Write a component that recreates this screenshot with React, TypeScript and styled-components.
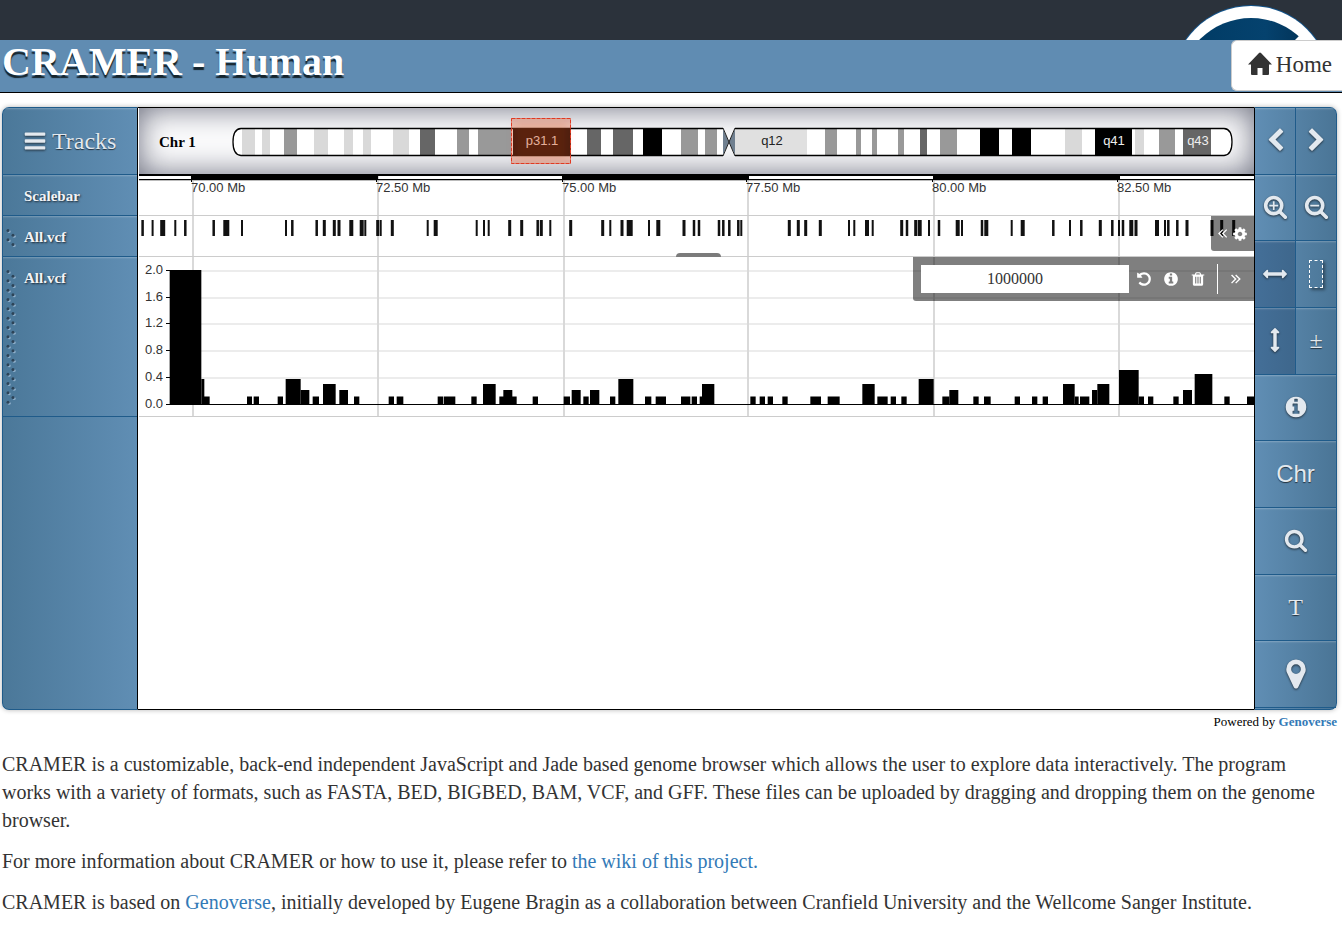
import React from "react";
import styled, { createGlobalStyle, css } from "styled-components";

const SERIF = '"Liberation Serif", "Times New Roman", serif';
const SANS = '"Liberation Sans", Arial, sans-serif';
const EDGE = "#1f5b8a";

const GlobalStyle = createGlobalStyle`
  *, *::before, *::after { box-sizing: border-box; }
  body { margin: 0; background: #fff; color: #333; font-family: ${SERIF}; }
  button, input { font-family: inherit; margin: 0; }
  a { color: #337ab7; text-decoration: none; }
`;

/* ---------- icons, on a 1792 unit square ---------- */

const LENS =
  "M1216 832q0-185-131.5-316.5t-316.5-131.5-316.5 131.5-131.5 316.5 131.5 316.5 316.5 131.5 316.5-131.5 131.5-316.5zm512 832q0 52-38 90t-90 38q-54 0-90-38l-343-342q-179 124-399 124-143 0-273.5-55.5t-225-150-150-225-55.5-273.5 55.5-273.5 150-225 225-150 273.5-55.5 273.5 55.5 225 150 150 225 55.5 273.5q0 220-124 399l343 343q37 37 37 90z";

const ICONS = {
  bars: "M1664 1344v128q0 26-19 45t-45 19h-1408q-26 0-45-19t-19-45v-128q0-26 19-45t45-19h1408q26 0 45 19t19 45zm0-512v128q0 26-19 45t-45 19h-1408q-26 0-45-19t-19-45v-128q0-26 19-45t45-19h1408q26 0 45 19t19 45zm0-512v128q0 26-19 45t-45 19h-1408q-26 0-45-19t-19-45v-128q0-26 19-45t45-19h1408q26 0 45 19t19 45z",
  left: "M1427 301l-531 531 531 531q19 19 19 45t-19 45l-166 166q-19 19-45 19t-45-19l-742-742q-19-19-19-45t19-45l742-742q19-19 45-19t45 19l166 166q19 19 19 45t-19 45z",
  right: "M1363 877l-742 742q-19 19-45 19t-45-19l-166-166q-19-19-19-45t19-45l531-531-531-531q-19-19-19-45t19-45l166-166q19-19 45-19t45 19l742 742q19 19 19 45t-19 45z",
  search: LENS,
  zoomIn:
    "M1088 800v64q0 13-9.5 22.5t-22.5 9.5h-224v224q0 13-9.5 22.5t-22.5 9.5h-64q-13 0-22.5-9.5t-9.5-22.5v-224h-224q-13 0-22.5-9.5t-9.5-22.5v-64q0-13 9.5-22.5t22.5-9.5h224v-224q0-13 9.5-22.5t22.5-9.5h64q13 0 22.5 9.5t9.5 22.5v224h224q13 0 22.5 9.5t9.5 22.5z" + LENS,
  zoomOut:
    "M1088 800v64q0 13-9.5 22.5t-22.5 9.5h-576q-13 0-22.5-9.5t-9.5-22.5v-64q0-13 9.5-22.5t22.5-9.5h576q13 0 22.5 9.5t9.5 22.5z" + LENS,
  horizontal:
    "M1792 896q0 26-19 45l-256 256q-19 19-45 19t-45-19-19-45v-128h-1024v128q0 26-19 45t-45 19-45-19l-256-256q-19-19-19-45t19-45l256-256q19-19 45-19t45 19 19 45v128h1024v-128q0-26 19-45t45-19 45 19l256 256q19 19 19 45z",
  vertical:
    "M1216 320q0 26-19 45t-45 19h-128v1024h128q26 0 45 19t19 45-19 45l-256 256q-19 19-45 19t-45-19l-256-256q-19-19-19-45t19-45 45-19h128v-1024h-128q-26 0-45-19t-19-45 19-45l256-256q19-19 45-19t45 19l256 256q19 19 19 45z",
  info: "M1152 1376v-160q0-14-9-23t-23-9h-96v-512q0-14-9-23t-23-9h-320q-14 0-23 9t-9 23v160q0 14 9 23t23 9h96v320h-96q-14 0-23 9t-9 23v160q0 14 9 23t23 9h448q14 0 23-9t9-23zm-128-896v-160q0-14-9-23t-23-9h-192q-14 0-23 9t-9 23v160q0 14 9 23t23 9h192q14 0 23-9t9-23zm640 416q0 209-103 385.5t-279.5 279.5-385.5 103-385.5-103-279.5-279.5-103-385.5 103-385.5 279.5-279.5 385.5-103 385.5 103 279.5 279.5 103 385.5z",
  marker:
    "M1152 640q0-106-75-181t-181-75-181 75-75 181 75 181 181 75 181-75 75-181zm256 0q0 109-33 179l-364 774q-16 33-47.5 52t-67.5 19-67.5-19-46.5-52l-365-774q-33-70-33-179 0-212 150-362t362-150 362 150 150 362z",
  cog: "M1152 896q0-106-75-181t-181-75-181 75-75 181 75 181 181 75 181-75 75-181zm512-109v222q0 12-8 23t-20 13l-185 28q-19 54-39 91 35 50 107 138 10 12 10 25t-9 23q-27 37-99 108t-94 71q-12 0-26-9l-138-108q-44 23-91 38-16 136-29 186-7 28-36 28h-222q-14 0-24.5-8.5t-11.5-21.5l-28-184q-49-16-90-37l-141 107q-10 9-25 9-14 0-25-11-126-114-165-168-7-10-7-23 0-12 8-23 15-21 51-66.5t54-70.5q-27-50-41-99l-183-27q-13-2-21-12.5t-8-23.5v-222q0-12 8-23t19-13l186-28q14-46 39-92-40-57-107-138-10-12-10-24 0-10 9-23 26-36 98.5-107.5t94.5-71.5q13 0 26 10l138 107q44-23 91-38 16-136 29-186 7-28 36-28h222q14 0 24.5 8.5t11.5 21.5l28 184q49 16 90 37l142-107q9-9 24-9 13 0 25 10 129 119 165 170 7 8 7 22 0 12-8 23-15 21-51 66.5t-54 70.5q26 50 41 98l183 28q13 2 21 12.5t8 23.5z",
  undo: "M1664 896q0 156-61 298t-164 245-245 164-298 61q-172 0-327-72.5t-264-204.5q-7-10-6.5-22.5t8.5-20.5l137-138q10-9 25-9 16 2 23 12 73 95 179 147t225 52q104 0 198.5-40.5t163.5-109.5 109.5-163.5 40.5-198.5-40.5-198.5-109.5-163.5-163.5-109.5-198.5-40.5q-98 0-188 35.5t-160 101.5l137 138q31 30 14 69-17 40-59 40h-448q-26 0-45-19t-19-45v-448q0-42 40-59 39-17 69 14l130 129q107-101 244.5-156.5t284.5-55.5q156 0 298 61t245 164 164 245 61 298z",
  trash:
    "M704 1376v-704q0-14-9-23t-23-9h-64q-14 0-23 9t-9 23v704q0 14 9 23t23 9h64q14 0 23-9t9-23zm256 0v-704q0-14-9-23t-23-9h-64q-14 0-23 9t-9 23v704q0 14 9 23t23 9h64q14 0 23-9t9-23zm256 0v-704q0-14-9-23t-23-9h-64q-14 0-23 9t-9 23v704q0 14 9 23t23 9h64q14 0 23-9t9-23zm-544-992h448l-48-117q-7-9-17-11h-317q-10 2-17 11zm928 32v64q0 14-9 23t-23 9h-96v948q0 83-47 143.5t-113 60.5h-832q-66 0-113-58.5t-47-141.5v-952h-96q-14 0-23-9t-9-23v-64q0-14 9-23t23-9h309l70-167q15-37 54-63t79-26h320q40 0 79 26t54 63l70 167h309q14 0 23 9t9 23z",
  collapse:
    "M880 380l110 110-406 406 406 406-110 110-516-516zM1340 380l110 110-406 406 406 406-110 110-516-516z",
  expand:
    "M912 380l-110 110 406 406-406 406 110 110 516-516zM452 380l-110 110 406 406-406 406 110 110 516-516z",
};

type IconName = keyof typeof ICONS;

const Icon = ({ name, size }: { name: IconName; size: number }) => (
  <svg width={size} height={size} viewBox="0 0 1792 1792" fill="currentColor" fillRule="evenodd" aria-hidden="true">
    <path d={ICONS[name]} />
  </svg>
);

/* ---------- page header ---------- */

const Banner = styled.div`
  display: flex;
  justify-content: flex-end;
  height: 40px;
  padding-right: 17px;
  overflow: hidden;
  background: #2b323b;
`;

const Header = styled.header`
  display: flex;
  justify-content: space-between;
  align-items: flex-start;
  height: 53px;
  background: #608cb2;
  border-bottom: 1px solid #000;
`;

const Title = styled.h1`
  margin: 0;
  padding-left: 2px;
  color: #fff;
  font-size: 40px;
  line-height: 44px;
  text-shadow: 0 3px 1px #16242c;
`;

const HomeLink = styled.a`
  display: flex;
  align-items: center;
  gap: 4px;
  height: 51px;
  padding: 0 10px 2px 16px;
  background: #fff;
  border: 1px solid #ccc;
  border-right: 0;
  border-radius: 6px 0 0 6px;
  color: #333;
  font-size: 23px;

  svg { margin-bottom: 2px; }
`;

/* ---------- browser frame ---------- */

const Browser = styled.main`
  display: grid;
  grid-template-columns: 136px minmax(0, 1fr) 83px;
  margin: 14px 5px 0 2px;
  border-radius: 7px;
  box-shadow: 0 0 5px rgba(0, 0, 0, 0.3);
`;

const bevel = css`
  border-bottom: 1px solid ${EDGE};
  box-shadow: inset 0 2px 2px -1px rgba(255, 255, 255, 0.25);
`;

const Labels = styled.aside`
  display: flex;
  flex-direction: column;
  background: linear-gradient(to right, #4b7899, #608eb4);
  border: 1px solid ${EDGE};
  border-right-color: #000;
  border-radius: 7px 0 0 7px;
`;

const TracksButton = styled.button`
  ${bevel}
  display: flex;
  align-items: center;
  gap: 5px;
  height: 67px;
  padding: 0 0 0 20px;
  border-width: 0 0 1px;
  background: none;
  color: #e3e9ef;
  font-size: 24px;
  text-shadow: 0 1px 1px #23313d;

  svg { filter: drop-shadow(0 1px 1px #23313d); }
`;

const Label = styled.div<{ $height: number }>`
  ${bevel}
  display: flex;
  align-items: flex-start;
  height: ${(p) => p.$height}px;
  color: #f2f4f7;
  font-size: 15px;
  font-weight: bold;
  line-height: 42px;
  text-shadow: 1px 1px 2px #1c2833;
`;

const HandleSlot = styled.span`
  width: 21px;
  padding: 12px 0 0 2px;
  line-height: 0;
`;

/* two staggered columns of embossed dots */
const Handle = ({ dots }: { dots: number }) => (
  <svg width="13" height={dots * 5 + 3} aria-hidden="true">
    {Array.from({ length: dots }, (_, i) => {
      const cx = i % 2 ? 8 : 3;
      const cy = 2.5 + i * 4.667;
      return (
        <g key={i}>
          <circle cx={cx + 1.2} cy={cy + 1} r="1.5" fill="#8fafca" />
          <circle cx={cx} cy={cy} r="1.5" fill="#2c4357" />
        </g>
      );
    })}
  </svg>
);

/* ---------- centre panel ---------- */

const Panel = styled.section`
  display: flex;
  flex-direction: column;
  min-width: 0;
  padding-left: 1px;
  border-top: 1px solid #000;
  border-bottom: 1px solid #000;
  background: #fff;
  overflow: hidden;
`;

const Drawing = styled.svg`
  display: block;
  width: 100%;
  font-family: ${SANS};
  font-size: 13px;
`;

const Karyotype = styled.div`
  display: flex;
  align-items: center;
  height: 66px;
  background: #fbfbfc;
  box-shadow: inset 0 0 30px rgba(56, 60, 82, 0.75);
`;

const ChromosomeName = styled.h2`
  flex: none;
  width: 93px;
  margin: 0;
  padding: 2px 0 0 20px;
  color: #000;
  font-size: 15px;
`;

const Track = styled.div`
  position: relative;
  border-bottom: 1px solid #ccc;
`;

const TrackMenu = styled.div<{ $wide?: boolean }>`
  position: absolute;
  top: 0;
  right: 0;
  display: flex;
  align-items: center;
  height: ${(p) => (p.$wide ? 44 : 35)}px;
  padding: ${(p) => (p.$wide ? "0 10px 0 8px" : "0 6px 0 4px")};
  gap: ${(p) => (p.$wide ? 11 : 2)}px;
  border-radius: 0 0 0 3px;
  background: rgba(0, 0, 0, 0.5);
  color: #fff;
`;

const MenuButton = styled.button`
  display: flex;
  padding: 0;
  border: 0;
  background: none;
  color: inherit;
`;

const Threshold = styled.input`
  width: 208px;
  height: 28px;
  margin-right: -4px;
  padding: 0 20px 0 0;
  border: 0;
  background: #fff;
  color: #333;
  font-size: 16px;
  text-align: center;
`;

const Divider = styled.span`
  width: 1px;
  height: 30px;
  margin-right: -1px;
  background: #fff;
`;

const Resizer = styled.div`
  position: absolute;
  bottom: -1px;
  left: calc(50% - 21px);
  width: 45px;
  height: 4px;
  border-radius: 4px 4px 0 0;
  background: #7b7b7b;
`;

/* ---------- right hand controls ---------- */

const Controls = styled.nav`
  display: grid;
  grid-template-columns: 41px 1fr;
  grid-template-rows: repeat(9, minmax(0, 1fr));
  height: 603px;
  padding-bottom: 1px;
  background: linear-gradient(to right, #608eb4, #4a7596);
  border: 1px solid ${EDGE};
  border-left-color: #000;
  border-radius: 0 7px 7px 0;
`;

const Control = styled.button<{ $wide?: boolean; $active?: boolean; $split?: boolean; $sans?: boolean }>`
  ${bevel}
  display: flex;
  align-items: center;
  justify-content: center;
  grid-column: ${(p) => (p.$wide ? "1 / -1" : "auto")};
  padding: 0;
  border-width: 0 ${(p) => (p.$split ? 1 : 0)}px 1px 0;
  border-style: solid;
  border-color: ${EDGE};
  background: ${(p) => (p.$active ? "linear-gradient(to right, #446f98, #3e678c)" : "none")};
  color: #e3e9ef;
  font-family: ${(p) => (p.$sans ? SANS : SERIF)};
  font-size: 24px;
  text-shadow: 0 1px 1px #23313d;

  svg {
    margin-bottom: 1px;
    filter: drop-shadow(0 1px 1px #23313d);
  }
`;

const SelectBox = styled.span`
  width: 14px;
  height: 28px;
  border: 1px dashed #fff;
  box-shadow: 2px 2px 3px rgba(0, 0, 0, 0.4);
`;

/* ---------- text below ---------- */

const Credit = styled.p`
  margin: 0;
  padding: 4px 5px 0 0;
  color: #000;
  font-size: 13px;
  line-height: 16px;
  text-align: right;

  a { font-weight: bold; }
`;

const About = styled.section`
  padding: 20px 5px 20px 2px;
  font-size: 20px;
  line-height: 28px;

  p { margin: 0 0 13px; }
`;

/* ---------- data ---------- */

const SHADE = { l: "#d9d9d9", m: "#999", d: "#666", k: "#000", c: "#e0e0e0" };

const BANDS: [number, number, keyof typeof SHADE][] = [
  [10, 23, "l"], [30, 38, "l"], [52, 65, "m"], [82, 96, "l"], [112, 121, "l"], [131, 139, "l"],
  [161, 177, "l"], [188, 203, "d"], [225, 237, "m"], [246, 279, "m"], [281, 339, "k"],
  [355, 369, "d"], [381, 401, "d"], [411, 430, "k"], [449, 466, "m"], [473, 485, "m"],
  [503, 575, "c"], [593, 605, "m"], [624, 629, "m"], [640, 645, "m"], [666, 672, "m"],
  [688, 695, "d"], [708, 725, "m"], [748, 767, "k"], [780, 799, "k"], [833, 850, "l"],
  [863, 900, "k"], [903, 912, "l"], [927, 943, "m"], [951, 979, "d"],
];

const VARIANTS: [number, number][] = [
  [3.6, 2.5], [13.6, 2], [23.7, 5], [36.3, 2], [46.3, 2.5], [74.7, 2.5], [87.3, 6], [103, 2], [147, 2],
  [153.3, 2.5], [177.7, 2.5], [185.3, 3], [195.3, 3], [200, 3], [212.3, 4], [222.7, 4], [226.3, 2],
  [238.7, 3], [241.7, 2], [253.3, 3], [288.7, 2], [296.7, 4], [337.7, 2], [345, 2], [349.7, 2],
  [370.7, 3], [382.7, 3], [398.7, 2.5], [402.3, 3], [411.3, 2], [431.7, 3], [463.7, 3], [471.3, 2],
  [483, 3], [490.7, 6], [510, 2], [519.3, 4], [545, 3], [555, 2.5], [560, 2.5], [580, 2.5], [584.3, 2.5],
  [590.3, 2.5], [599.3, 2.5], [602.3, 2], [650.3, 3], [659.3, 3], [666.7, 3], [681.3, 3], [710, 2],
  [715.3, 2], [728, 4], [733.7, 2], [762.7, 3], [768, 2.5], [776.7, 3], [780.7, 4], [790, 2], [800, 2.5],
  [818.7, 4], [823, 2], [843, 2.5], [847.3, 4], [872.7, 2], [883.7, 4], [914.3, 2.5], [931, 2],
  [942.3, 2.5], [961.3, 3], [973.3, 2.5], [980, 2], [984, 2.5], [992.3, 4], [997, 3], [1018, 4],
  [1026, 2], [1029.3, 2.5], [1038.3, 2.5], [1048, 3], [1073, 3], [1082.7, 3], [1094.7, 3],
];

/* start bin, end bin, density; three bins to a pixel */
const DENSITY: [number, number, number][] = [
  [92, 187, 2], [187, 196, 0.4], [195, 212, 0.1], [324, 339, 0.1], [344, 360, 0.1], [416, 432, 0.1],
  [440, 485, 0.4], [485, 511, 0.2], [521, 540, 0.1], [552, 590, 0.3], [601, 627, 0.2], [645, 661, 0.1],
  [749, 765, 0.1], [773, 793, 0.1], [896, 912, 0.1], [914, 949, 0.1], [997, 1013, 0.1], [1032, 1070, 0.3],
  [1081, 1133, 0.1], [1093, 1120, 0.2], [1181, 1197, 0.1], [1274, 1293, 0.1], [1298, 1325, 0.2],
  [1333, 1349, 0.1], [1353, 1381, 0.2], [1413, 1429, 0.1], [1438, 1483, 0.4], [1518, 1537, 0.1],
  [1550, 1581, 0.1], [1626, 1654, 0.1], [1658, 1674, 0.1], [1682, 1691, 0.1], [1689, 1726, 0.3],
  [1834, 1850, 0.1], [1862, 1878, 0.1], [1886, 1902, 0.1], [1930, 1946, 0.1], [2014, 2046, 0.1],
  [2066, 2102, 0.1], [2170, 2207, 0.3], [2215, 2246, 0.1], [2255, 2271, 0.1], [2287, 2303, 0.1],
  [2339, 2384, 0.4], [2410, 2431, 0.1], [2431, 2458, 0.2], [2503, 2519, 0.1], [2535, 2555, 0.1],
  [2627, 2643, 0.1], [2679, 2695, 0.1], [2711, 2727, 0.1], [2772, 2807, 0.3], [2807, 2819, 0.1],
  [2823, 2851, 0.1], [2859, 2875, 0.2], [2875, 2911, 0.3], [2940, 2999, 0.5], [2999, 3015, 0.1],
  [3027, 3043, 0.1], [3103, 3119, 0.1], [3132, 3159, 0.2], [3167, 3220, 0.45], [3256, 3272, 0.1],
  [3324, 3346, 0.1],
];

const BAR_HEIGHT: Record<string, number> = { "0.1": 7.5, "0.2": 14, "0.3": 20, "0.4": 25, "0.45": 30, "0.5": 34, "2": 134 };

const TICKS: [number, string][] = [
  [53, "70.00 Mb"], [238, "72.50 Mb"], [424, "75.00 Mb"], [608, "77.50 Mb"], [794, "80.00 Mb"], [979, "82.50 Mb"],
];

const Gridlines = ({ height }: { height: number }) => (
  <>
    {TICKS.map(([x]) => (
      <rect key={x} x={x} width="2" height={height} fill="#d9d9d9" />
    ))}
  </>
);

const Chromosome = () => (
  <Drawing height="66" role="img" aria-label="Chromosome 1 bands">
    <defs>
      <clipPath id="arms">
        <path d="M9 20H491V48H9Q0 48 0 34T9 20ZM503 20H992Q1001 20 1001 34T992 48H503Z" />
      </clipPath>
      <filter id="soft" x="-20%" y="-20%" width="140%" height="140%">
        <feGaussianBlur stdDeviation="4" />
      </filter>
    </defs>
    <g clipPath="url(#arms)">
      <rect y="20" width="1001" height="28" fill="#fff" />
      {BANDS.map(([from, to, shade]) => (
        <rect key={from} x={from} y="20" width={to - from} height="28" fill={SHADE[shade]} />
      ))}
    </g>
    <path d="M491 21L497 34L491 47ZM503 21L497 34L503 47Z" fill="#708090" />
    <path d="M491 20L503 48M503 20L491 48" stroke="#222" fill="none" />
    <path
      d="M491 20.5H9Q1 21 1 34T9 47.5H491M503 20.5H992Q1000 21 1000 34T992 47.5H503"
      stroke="#000"
      strokeWidth="1.3"
      fill="none"
    />
    <text x="540" y="37" textAnchor="middle" fill="#222">q12</text>
    <text x="882" y="37" textAnchor="middle" fill="#eee">q41</text>
    <text x="966" y="37" textAnchor="middle" fill="#eee">q43</text>
    <text x="310" y="37" textAnchor="middle" fill="#eee">p31.1</text>
    <rect x="279" y="10" width="60" height="46" fill="#e4572e" fillOpacity="0.33" />
    <rect x="283" y="14" width="52" height="38" fill="#d0401a" fillOpacity="0.12" filter="url(#soft)" />
    <rect x="279.5" y="10.5" width="59" height="45" fill="none" stroke="#e03a22" strokeDasharray="4 1" />
  </Drawing>
);

const Scalebar = () => (
  <Drawing height="41" role="img" aria-label="Scale, 70 to 82.5 megabases">
    <Gridlines height={41} />
    <rect width="100%" height="2" fill="#000" />
    <rect y="5" width="100%" height="1" fill="#000" />
    <rect y="6" width="100%" height="1" fill="#bbb" />
    {[52, 423, 794].map((x) => (
      <rect key={x} x={x} width="187" height="6" fill="#000" />
    ))}
    {TICKS.map(([x, text]) => (
      <g key={text}>
        <rect x={x - 1} y="5" width="1" height="3" fill="#000" />
        <text x={x - 1} y="18" fill="#333">{text}</text>
      </g>
    ))}
  </Drawing>
);

const VariantTrack = () => (
  <Drawing height="40" role="img" aria-label="Variants">
    <Gridlines height={40} />
    {VARIANTS.map(([x, w]) => (
      <rect key={x} x={x - w / 2} y="4" width={w} height="16" fill="#111" />
    ))}
  </Drawing>
);

const DensityTrack = () => (
  <Drawing height="159" role="img" aria-label="Variant density">
    {[0, 1, 2, 3, 4].map((i) => (
      <rect key={i} x="31" y={13 + Math.round(i * 26.7)} width="100%" height="2" fill="#ececec" />
    ))}
    <Gridlines height={159} />
    {["2.0", "1.6", "1.2", "0.8", "0.4", "0.0"].map((value, i) => (
      <g key={value}>
        <text x="24" y={17 + Math.round(i * 26.7)} textAnchor="end" fill="#333">{value}</text>
        <rect x="27" y={13 + Math.round(i * 26.7)} width="4" height="1" fill="#000" />
      </g>
    ))}
    {DENSITY.map(([from, to, value]) => (
      <rect key={from} x={from / 3} y={147 - BAR_HEIGHT[value]} width={(to - from) / 3} height={BAR_HEIGHT[value]} fill="#000" />
    ))}
    <rect x="27" y="147" width="100%" height="1" fill="#000" />
  </Drawing>
);

const App = () => (
  <>
    <GlobalStyle />
    <Banner>
      <svg width="150" height="40" role="img" aria-label="Logo">
        <defs>
          <linearGradient id="disc" x1="0" x2="1">
            <stop offset="0" stopColor="#003a63" />
            <stop offset="0.6" stopColor="#05426e" />
            <stop offset="1" stopColor="#002c4d" />
          </linearGradient>
        </defs>
        <circle cx="76" cy="85" r="80" fill="#14548a" />
        <circle cx="76" cy="85" r="79" fill="#fff" />
        <circle cx="76" cy="90" r="72" fill="url(#disc)" />
        <path d="M124 36L120 40H136Z" fill="#fff" />
      </svg>
    </Banner>
    <Header>
      <Title>CRAMER - Human</Title>
      <HomeLink href="#home">
        <svg width="24" height="24" viewBox="0 0 24 24" fill="#333" aria-hidden="true">
          <path d="M11 1Q12 0 13 1L24 12.5H21V22Q21 23 20 23H14.5V16H9.500V23H4Q3 23 3 22V12.5H0Z" />
        </svg>
        Home
      </HomeLink>
    </Header>

    <Browser>
      <Labels>
        <TracksButton type="button">
          <Icon name="bars" size={24} />
          Tracks
        </TracksButton>
        <Label $height={41}><HandleSlot />Scalebar</Label>
        <Label $height={41}><HandleSlot><Handle dots={4} /></HandleSlot>All.vcf</Label>
        <Label $height={160}><HandleSlot><Handle dots={29} /></HandleSlot>All.vcf</Label>
      </Labels>

      <Panel>
        <Karyotype>
          <ChromosomeName>Chr 1</ChromosomeName>
          <Chromosome />
        </Karyotype>
        <Track>
          <Scalebar />
        </Track>
        <Track>
          <VariantTrack />
          <TrackMenu>
            <MenuButton type="button" aria-label="Open menu"><Icon name="collapse" size={15} /></MenuButton>
            <MenuButton type="button" aria-label="Settings"><Icon name="cog" size={16} /></MenuButton>
          </TrackMenu>
          <Resizer />
        </Track>
        <Track>
          <DensityTrack />
          <TrackMenu $wide>
            <Threshold type="text" aria-label="Threshold" defaultValue="1000000" />
            <MenuButton type="button" aria-label="Reset"><Icon name="undo" size={16} /></MenuButton>
            <MenuButton type="button" aria-label="Information"><Icon name="info" size={16} /></MenuButton>
            <MenuButton type="button" aria-label="Remove"><Icon name="trash" size={16} /></MenuButton>
            <Divider />
            <MenuButton type="button" aria-label="Close menu"><Icon name="expand" size={16} /></MenuButton>
          </TrackMenu>
        </Track>
      </Panel>

      <Controls aria-label="Browser controls">
        <Control type="button" $split aria-label="Scroll left"><Icon name="left" size={25} /></Control>
        <Control type="button" aria-label="Scroll right"><Icon name="right" size={25} /></Control>
        <Control type="button" $split aria-label="Zoom in"><Icon name="zoomIn" size={25} /></Control>
        <Control type="button" aria-label="Zoom out"><Icon name="zoomOut" size={25} /></Control>
        <Control type="button" $split $active aria-label="Pan"><Icon name="horizontal" size={24} /></Control>
        <Control type="button" aria-label="Select region"><SelectBox /></Control>
        <Control type="button" $split $active aria-label="Scroll tracks"><Icon name="vertical" size={24} /></Control>
        <Control type="button">±</Control>
        <Control type="button" $wide aria-label="Information"><Icon name="info" size={24} /></Control>
        <Control type="button" $wide $sans>Chr</Control>
        <Control type="button" $wide aria-label="Search"><Icon name="search" size={24} /></Control>
        <Control type="button" $wide>T</Control>
        <Control type="button" $wide aria-label="Go to position"><Icon name="marker" size={34} /></Control>
      </Controls>
    </Browser>
    <Credit>
      Powered by <a href="#genoverse">Genoverse</a>
    </Credit>

    <About>
      <p>
        CRAMER is a customizable, back-end independent JavaScript and Jade based genome browser which allows the user
        to explore data interactively. The program works with a variety of formats, such as FASTA, BED, BIGBED, BAM,
        VCF, and GFF. These files can be uploaded by dragging and dropping them on the genome browser.
      </p>
      <p>
        For more information about CRAMER or how to use it, please refer to <a href="#wiki">the wiki of this project.</a>
      </p>
      <p>
        CRAMER is based on <a href="#genoverse">Genoverse</a>, initially developed by Eugene Bragin as a collaboration
        between Cranfield University and the Wellcome Sanger Institute.
      </p>
    </About>
  </>
);

export default App;
